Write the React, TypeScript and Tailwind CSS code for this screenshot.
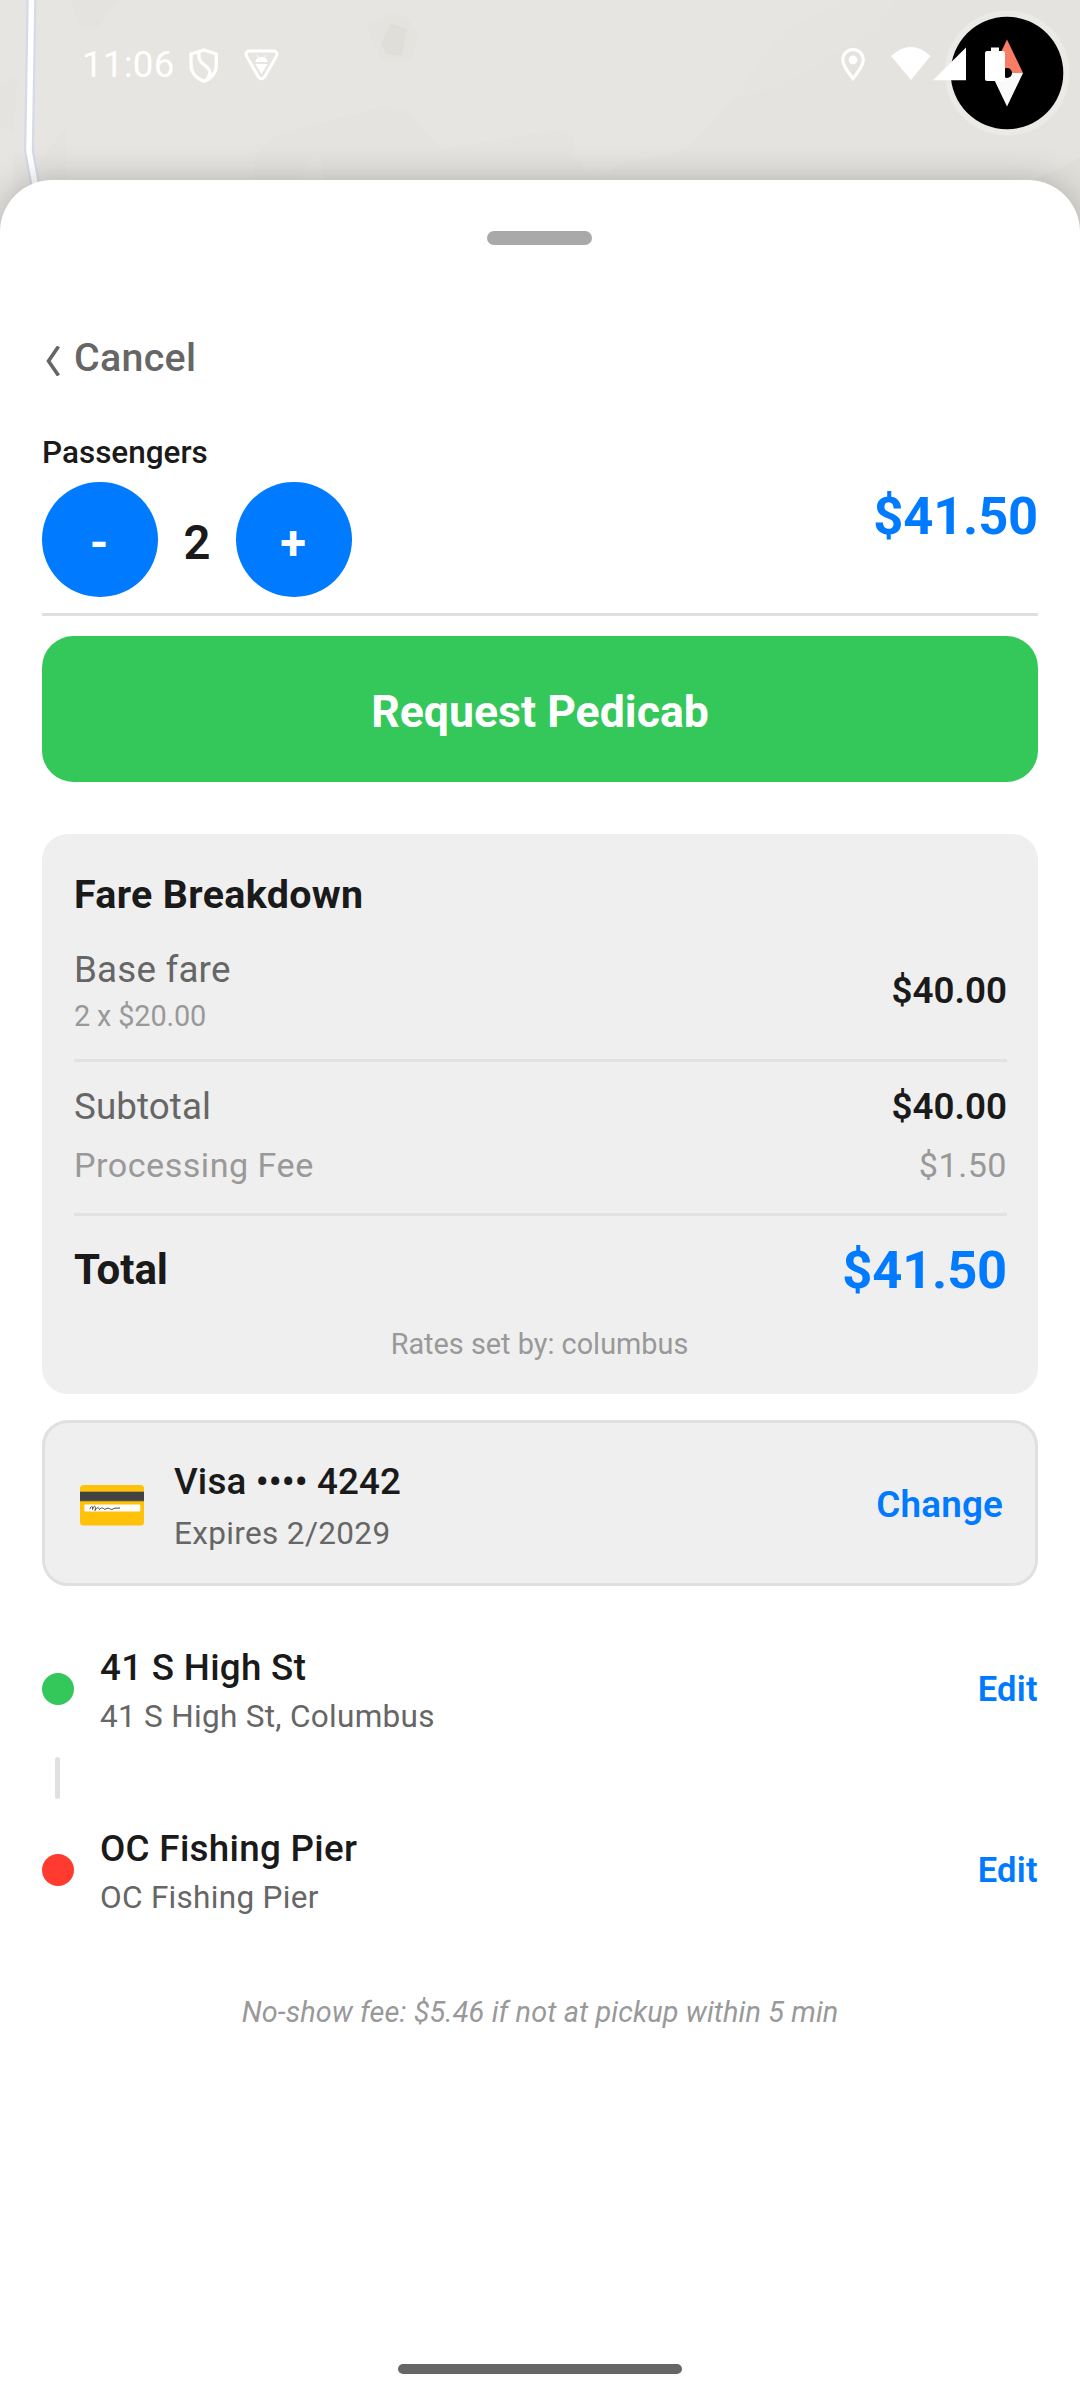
import { useState } from "react";

const BASE_FARE = 20;
const PROCESSING_FEE = 1.5;

const money = (value: number) => `$${value.toFixed(2)}`;

function MapBackdrop() {
  return (
    <svg
      className="absolute top-0 left-0"
      width="1080"
      height="260"
      viewBox="0 0 1080 260"
      fill="none"
    >
      <rect width="1080" height="260" fill="#e6e5e1" />
      <g fill="#e4e3df">
        <path d="M70 0H120C108 8 104 20 97 29H82C76 18 74 8 70 0Z" />
        <path d="M0 84L18 76L13 132L0 126Z" />
        <path d="M14 155H45L65 129L68 200H14Z" />
        <path d="M366 24L391 13L407 18L418 34L412 60H381Z" />
        <path d="M255 200V158Q266 140 282 133L340 118L385 107L408 112L442 150L563 129L575 139L571 160H580L585 175H605L617 165L687 149L735 97L780 87L876 28L893 0H1080V260H255Z" />
      </g>
      <path d="M780 33L840 0H893L876 28L780 87L735 97Z" fill="#e5e4e0" />
      <path d="M391 23L407 29L402 55H387L381 44Z" fill="#dfded9" />
      <path d="M301 180C306 168 310 156 315 156L323 159V180Z" fill="#e6e5e1" />
      <path d="M1080 157L1062 168L1020 184V240H1080Z" fill="#e0dfda" />
      <path d="M31.5 -2L29 151L39 205" stroke="#d6dae6" strokeWidth="10" />
      <path d="M31.5 -2L29 151L39 205" stroke="#fff" strokeWidth="5.5" />
    </svg>
  );
}

function Compass() {
  return (
    <svg
      className="absolute top-[10px] left-[944px]"
      width="126"
      height="126"
      viewBox="0 0 126 126"
    >
      <circle cx="63" cy="63" r="62.5" fill="#ebeae6" />
      <circle cx="63" cy="63" r="56.3" fill="#000" />
      <path d="M63 29.5L79 63H47Z" fill="#f77e64" />
      <path d="M63 96.5L79 63H47Z" fill="#fafafa" />
      <circle cx="63" cy="63" r="5" fill="#000" />
    </svg>
  );
}

function StatusBar() {
  return (
    <div className="relative flex h-32 items-center pl-[82px] text-white">
      <span className="w-[92px] whitespace-nowrap pt-[2px] text-[36.75px] leading-[44px] tracking-[0.2px]">
        11:06
      </span>
      <svg className="ml-[15px] mt-[3px]" width="30" height="36" viewBox="0 0 30 36" fill="none">
        <path
          d="M15 2L27.3 6V17C27.3 24.5 22.5 30.5 15 33.3C7.5 30.5 2 24.5 2 17V6Z"
          stroke="currentColor"
          strokeWidth="3.4"
          strokeLinejoin="round"
        />
        <path
          d="M10 4V9C10 17 21 17 21 25C21 27 20 28 18.5 30.5"
          stroke="currentColor"
          strokeWidth="3.4"
        />
      </svg>
      <svg className="ml-[25px] mt-[2px]" width="35" height="32" viewBox="0 0 35 32" fill="none">
        <path
          d="M5 2H30Q34 3 32.5 7L20.5 28Q17.5 31.5 14.5 28L2.5 7Q1 3 5 2Z"
          stroke="currentColor"
          strokeWidth="3"
          strokeLinejoin="round"
        />
        <path d="M14.3 8.5L13 6M20.7 8.5L22 6" stroke="currentColor" />
        <path d="M11.3 13Q12 8 17.5 8T23.7 13Z" fill="currentColor" />
        <path d="M11.3 15H23.7L17.5 25Z" fill="currentColor" />
      </svg>
      <svg className="ml-[562px] mt-[2px]" width="24" height="34" viewBox="0 0 24 34" fill="none">
        <path
          d="M12 1.7C6 1.7 1.8 6 1.8 12C1.8 18 8 25.5 12 30.5C16 25.5 22.2 18 22.2 12C22.2 6 18 1.7 12 1.7Z"
          stroke="currentColor"
          strokeWidth="3.2"
        />
        <circle cx="12" cy="11.8" r="4.4" fill="currentColor" />
      </svg>
      <svg className="ml-[26px]" width="40" height="34" viewBox="0 0 40 34">
        <path d="M0 9Q20 -9 39.5 9L20 33Z" fill="currentColor" />
      </svg>
      <svg className="ml-[2px]" width="34" height="34" viewBox="0 0 34 34">
        <path d="M0 33.3L33 0.5V33.3Z" fill="currentColor" />
      </svg>
      <svg className="ml-[18px]" width="20" height="34" viewBox="0 0 20 34">
        <path
          d="M6 0.5H14V4H18Q20 4 20 6V32Q20 34 18 34H2Q0 34 0 32V6Q0 4 2 4H6Z"
          fill="currentColor"
        />
      </svg>
    </div>
  );
}

function CardEmoji() {
  return (
    <svg className="mt-[6px]" width="64" height="42" viewBox="0 0 64 42" fill="none">
      <rect width="64" height="40.5" rx="3.5" fill="#ffc10a" />
      <rect y="7" width="64" height="9" fill="#424242" />
      <path d="M0 6.5H64M0 16.3H64" stroke="#c29a1e" />
      <rect x="4.3" y="19.5" width="56" height="7" rx="1" fill="#fff" />
      <path
        d="M10 24C11 20.5 13 20.5 12.5 24.5C13.5 20 16.5 20 15 25.5C17 21.5 19 22.5 19.5 24.5C22 21.5 23 23.5 25 24.5C28 21.5 30 24.5 32 24.5C34 22.5 36 23.5 40 23"
        stroke="#424242"
      />
    </svg>
  );
}

function StepButton({ label, onClick }: { label: string; onClick: () => void }) {
  return (
    <button
      onClick={onClick}
      className="flex h-[115px] w-[116px] items-center justify-center rounded-full bg-[#007aff] pt-[6px] pr-[2px] text-[47.25px] font-bold leading-[54px] text-white"
    >
      {label}
    </button>
  );
}

type StopProps = {
  title: string;
  address: string;
  dotClass: string;
};

function StopRow({ title, address, dotClass }: StopProps) {
  return (
    <div className="flex h-[93px] items-center">
      <div className={`size-8 rounded-full ${dotClass}`} />
      <div className="ml-[26px] flex-1 pt-1">
        <p className="text-[36.75px] font-medium leading-[44px] tracking-[0.3px]">{title}</p>
        <p className="mt-[8px] text-[31.5px] leading-[38px] tracking-[0.3px] text-[#666]">
          {address}
        </p>
      </div>
      <button className="text-[34.5px] font-semibold leading-[40px] tracking-[0.3px] text-[#007aff]">
        Edit
      </button>
    </div>
  );
}

export default function App() {
  const [passengers, setPassengers] = useState(2);
  const subtotal = passengers * BASE_FARE;
  const total = subtotal + PROCESSING_FEE;

  return (
    <div className="relative flex h-[2400px] w-[1080px] flex-col overflow-hidden bg-white font-['Roboto',sans-serif] text-[#1a1a1a]">
      {/* Map behind the sheet */}
      <header className="h-[180px] shrink-0">
        <MapBackdrop />
        <Compass />
        <StatusBar />
      </header>

      <main className="relative flex flex-1 flex-col rounded-t-[52px] bg-white px-[42px] shadow-[0_2px_36px_rgba(0,0,0,0.26)]">
        <div className="mt-[51px] mr-px h-[14px] w-[105px] self-center rounded-full bg-[#a9a9a9]" />

        <button className="mt-[90px] flex h-[46px] items-center self-start text-[39.375px] font-medium leading-[46px] tracking-[0.3px] text-[#666]">
          <svg className="ml-1 mt-[5px] mr-[13px]" width="15" height="30" viewBox="0 0 15 30" fill="none">
            <path d="M12.5 0.5L2.5 15L12.5 29.5" stroke="currentColor" strokeWidth="3.6" />
          </svg>
          Cancel
        </button>

        {/* Passenger count and price */}
        <section className="mt-[53px] flex items-center justify-between border-b-3 border-[#e0e0e0] pb-4">
          <div>
            <p className="text-[31.5px] font-medium leading-[38px]">Passengers</p>
            <div className="mt-[10px] flex items-center">
              <StepButton
                label="-"
                onClick={() => setPassengers(Math.max(1, passengers - 1))}
              />
              <span className="w-[78px] pt-[6px] text-center text-[47.25px] font-semibold leading-[54px]">
                {passengers}
              </span>
              <StepButton label="+" onClick={() => setPassengers(passengers + 1)} />
            </div>
          </div>
          <span className="text-[52.5px] font-bold leading-[62px] tracking-[-0.2px] text-[#007aff]">
            {money(total)}
          </span>
        </section>

        <button className="mt-5 h-[146px] rounded-[31.5px] bg-[#34c759] pt-[7px] text-[44.625px] font-bold text-white">
          Request Pedicab
        </button>

        {/* Fare breakdown */}
        <section className="mt-[52px] flex h-[560px] flex-col rounded-[26px] bg-[#efefef] pt-[38px] pr-[31px] pl-8">
          <h2 className="text-[39.375px] font-bold leading-[46px] tracking-[0.35px]">
            Fare Breakdown
          </h2>
          <div className="mt-[30px] flex items-center justify-between">
            <div>
              <p className="text-[36.75px] leading-[44px] tracking-[0.2px] text-[#666]">Base fare</p>
              <p className="mt-[7px] text-[28.875px] leading-[34px] tracking-[-0.15px] text-[#999]">
                {passengers} x {money(BASE_FARE)}
              </p>
            </div>
            <span className="text-[36.75px] font-semibold leading-[44px]">{money(subtotal)}</span>
          </div>
          <div className="mt-[26px] h-[3px] bg-[#e2e2e2]" />
          <div className="mt-[23px] flex justify-between text-[36.75px] leading-[44px]">
            <span className="tracking-[0.1px] text-[#666]">Subtotal</span>
            <span className="font-semibold">{money(subtotal)}</span>
          </div>
          <div className="mt-[16px] flex justify-between text-[34.125px] leading-[40px] tracking-[0.5px] text-[#999]">
            <span>Processing Fee</span>
            <span>{money(PROCESSING_FEE)}</span>
          </div>
          <div className="mt-[28px] h-[3px] bg-[#e2e2e2]" />
          <div className="mt-[23px] flex h-[62px] items-center justify-between font-bold">
            <span className="text-[42px] leading-[50px]">Total</span>
            <span className="text-[52.5px] leading-[62px] tracking-[-0.2px] text-[#007aff]">
              {money(total)}
            </span>
          </div>
          <p className="mt-[26px] pr-[2px] text-center text-[28.875px] leading-[34px] text-[#999]">
            Rates set by: columbus
          </p>
        </section>

        {/* Payment method */}
        <section className="mt-[26px] flex h-[166px] items-center rounded-[26px] border-3 border-[#e0e0e0] bg-[#efefef] pl-[35px] pr-8">
          <CardEmoji />
          <div className="ml-[30px] flex-1 pt-[6px]">
            <p className="text-[36.75px] font-medium leading-[44px] tracking-[0.15px]">
              Visa •••• 4242
            </p>
            <p className="mt-[11px] text-[31.5px] leading-[38px] tracking-[0.35px] text-[#666]">
              Expires 2/2029
            </p>
          </div>
          <button className="pt-[4px] text-[36.75px] font-semibold leading-[44px] tracking-[0.2px] text-[#007aff]">
            Change
          </button>
        </section>

        {/* Route */}
        <section className="mt-[56px] flex flex-col">
          <StopRow title="41 S High St" address="41 S High St, Columbus" dotClass="bg-[#34c759]" />
          <div className="mt-[22px] mb-[24px] ml-[13px] h-[42px] w-[5px] rounded-full bg-[#e0e0e0]" />
          <StopRow title="OC Fishing Pier" address="OC Fishing Pier" dotClass="bg-[#ff3b30]" />
        </section>

        <p className="mt-[79px] text-center text-[28.875px] italic leading-[34px] tracking-[0.1px] text-[#999]">
          No-show fee: $5.46 if not at pickup within 5 min
        </p>

        <div className="mt-auto mb-[26px] h-[10px] w-[284px] self-center rounded-full bg-[#666]" />
      </main>
    </div>
  );
}
